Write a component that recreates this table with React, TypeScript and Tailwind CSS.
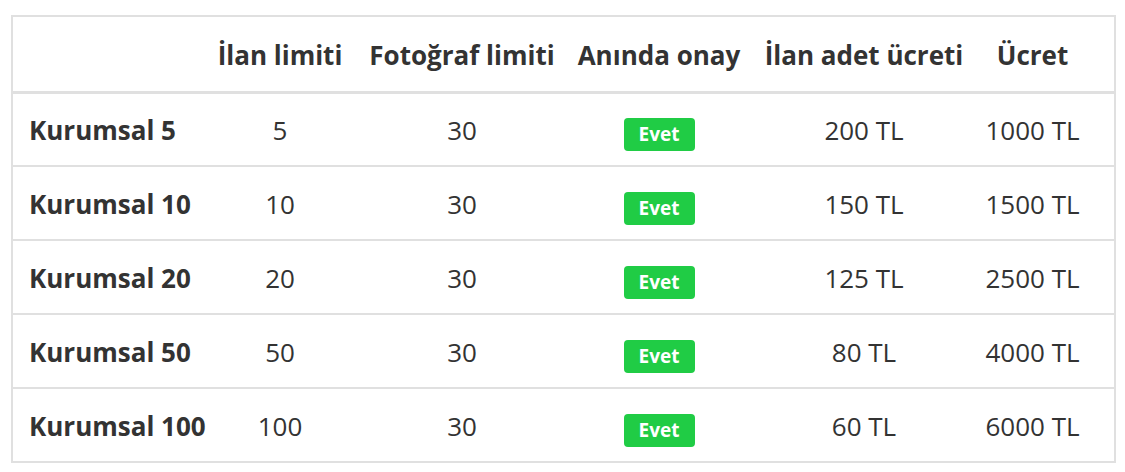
const rows = [
  { name: 'Kurumsal 5', limit: '5', photo: '30', unit: '200 TL', price: '1000 TL' },
  { name: 'Kurumsal 10', limit: '10', photo: '30', unit: '150 TL', price: '1500 TL' },
  { name: 'Kurumsal 20', limit: '20', photo: '30', unit: '125 TL', price: '2500 TL' },
  { name: 'Kurumsal 50', limit: '50', photo: '30', unit: '80 TL', price: '4000 TL' },
  { name: 'Kurumsal 100', limit: '100', photo: '30', unit: '60 TL', price: '6000 TL' },
];

export default function App() {
  return (
    <div className="w-[1125px] h-[472px] bg-white pt-[15px] pl-[11px] font-['Open_Sans',sans-serif] text-[#333]">
      <table className="w-[1103px] table-fixed border-collapse border-2 border-[#e0e0e0]">
        <colgroup>
          <col className="w-[197px]" />
          <col className="w-[142px]" />
          <col className="w-[222px]" />
          <col className="w-[172px]" />
          <col className="w-[238px]" />
          <col className="w-[132px]" />
        </colgroup>
        <thead>
          <tr className="h-[76px] border-b-[3px] border-[#e0e0e0] text-[26px] font-bold">
            <th></th>
            <th className="pt-[4px] text-center whitespace-nowrap">İlan limiti</th>
            <th className="pt-[4px] text-center whitespace-nowrap">Fotoğraf limiti</th>
            <th className="pt-[4px] text-center whitespace-nowrap">Anında onay</th>
            <th className="pt-[4px] text-center whitespace-nowrap">İlan adet ücreti</th>
            <th className="pt-[4px] text-center whitespace-nowrap pr-[32px]">Ücret</th>
          </tr>
        </thead>
        <tbody>
          {rows.map((r) => (
            <tr key={r.name} className="h-[74px] border-b-2 border-[#e0e0e0] text-[26px]">
              <td className="pt-[3px] pl-[16px] font-bold whitespace-nowrap">{r.name}</td>
              <td className="pt-[3px] text-center">{r.limit}</td>
              <td className="pt-[3px] text-center">{r.photo}</td>
              <td className="pt-[5px] text-center">
                <span className="inline-flex items-center justify-center w-[71px] h-[33px] rounded-[4px] bg-[#20cc45] text-white text-[19px] font-bold">
                  Evet
                </span>
              </td>
              <td className="pt-[3px] text-center">{r.unit}</td>
              <td className="pt-[3px] text-center pr-[32px]">{r.price}</td>
            </tr>
          ))}
        </tbody>
      </table>
    </div>
  );
}
